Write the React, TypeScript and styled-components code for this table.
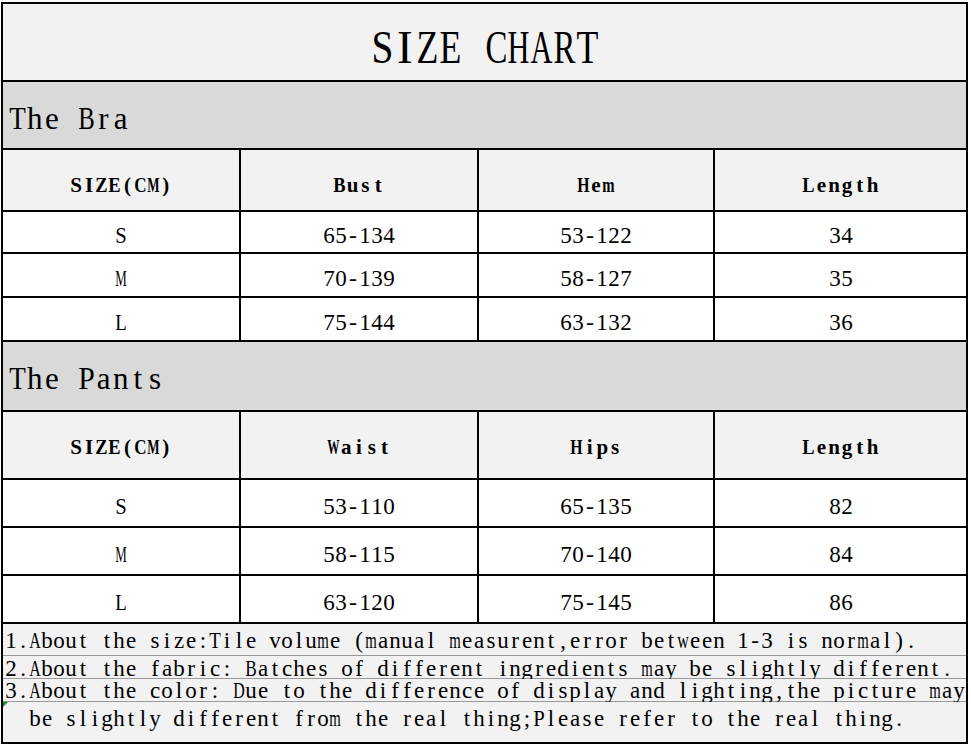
import React from "react";
import styled, { createGlobalStyle } from "styled-components";

const GlobalStyle = createGlobalStyle`
  html, body {
    margin: 0;
    padding: 0;
    background: #ffffff;
  }
`;

// SimSun-like look: serif glyphs squeezed into fixed half-width cells
const serif = `"Liberation Serif", "Noto Sans CJK SC", serif`;

// advance widths (1/1000 em) of the serif face, regular and bold
const regularW: Record<string, number> = {
  A: 722, B: 667, C: 667, D: 722, E: 611, F: 556, G: 722, H: 722, I: 333, J: 389, K: 722, L: 611, M: 889,
  N: 722, O: 722, P: 556, Q: 722, R: 667, S: 556, T: 611, U: 722, V: 722, W: 944, X: 722, Y: 722, Z: 611,
  a: 444, b: 500, c: 444, d: 500, e: 444, f: 333, g: 500, h: 500, i: 278, j: 278, k: 500, l: 278, m: 778,
  n: 500, o: 500, p: 500, q: 500, r: 333, s: 389, t: 278, u: 500, v: 500, w: 722, x: 500, y: 500, z: 444,
  "(": 333, ")": 333, "-": 333, ".": 250, ",": 250, ":": 278, ";": 278, " ": 250,
};
const boldW: Record<string, number> = {
  A: 722, B: 667, C: 722, D: 722, E: 667, H: 778, I: 389, L: 667, M: 944, P: 611, S: 556, W: 1000, Z: 667,
  a: 500, e: 444, g: 500, h: 556, i: 278, m: 833, n: 556, p: 556, s: 389, t: 333, u: 556,
  "(": 333, ")": 333,
};

type Section = {
  title: string;
  bandHeight: number;
  bandPad: number;
  headHeight: number;
  headPad: number;
  rowPad: number;
  columns: string[];
  rows: { h: number; cells: string[] }[];
};

const sections: Section[] = [
  {
    title: "The Bra",
    bandHeight: 68,
    bandPad: 6,
    headHeight: 62,
    headPad: 11,
    rowPad: 6,
    columns: ["SIZE(CM)", "Bust", "Hem", "Length"],
    rows: [
      { h: 42, cells: ["S", "65-134", "53-122", "34"] },
      { h: 44, cells: ["M", "70-139", "58-127", "35"] },
      { h: 44, cells: ["L", "75-144", "63-132", "36"] },
    ],
  },
  {
    title: "The Pants",
    bandHeight: 70,
    bandPad: 4,
    headHeight: 68,
    headPad: 4,
    rowPad: 5,
    columns: ["SIZE(CM)", "Waist", "Hips", "Length"],
    rows: [
      { h: 48, cells: ["S", "53-110", "65-135", "82"] },
      { h: 48, cells: ["M", "58-115", "70-140", "84"] },
      { h: 48, cells: ["L", "63-120", "75-145", "86"] },
    ],
  },
];

const notes: { h: number; pad: number; text: string; mark?: boolean }[] = [
  { h: 32, pad: 2, text: "1.About the size:Tile volume (manual measurent,error between 1-3 is normal)." },
  { h: 23, pad: 3, text: "2.About the fabric: Batches of different ingredients may be slightly different." },
  { h: 23, pad: 2, text: "3.About the color: Due to the difference of display and lighting,the picture may" },
  { h: 40, pad: -6, text: "  be slightly different from the real thing;Please refer to the real thing.", mark: true },
];

const Chart = styled.div`
  box-sizing: border-box;
  width: 967px;
  margin: 2px 0 0 1px;
  border: 2px solid #000;
  color: #000;
`;

const MonoLine = styled.span<{ $size: number; $lh: number; $bold?: boolean }>`
  display: inline-flex;
  font-family: ${serif};
  font-size: ${(p) => p.$size}px;
  font-weight: ${(p) => (p.$bold ? 700 : 400)};
  line-height: ${(p) => p.$lh}px;
  white-space: pre;
`;

const Glyph = styled.span<{ $w: number; $sx: number }>`
  display: inline-flex;
  justify-content: center;
  width: ${(p) => p.$w}px;
  transform: scaleX(${(p) => p.$sx});
`;

function Mono(props: { text: string; size: number; cell: number; lh?: number; bold?: boolean }) {
  const { text, size, cell, lh, bold } = props;
  const table = bold ? boldW : regularW;
  return (
    <MonoLine $size={size} $lh={lh ?? size} $bold={bold}>
      {Array.from(text).map((ch, i) => {
        const adv = ((table[ch] ?? regularW[ch] ?? 500) / 1000) * size;
        const sx = Math.min(1, (cell * 0.96) / adv);
        return (
          <Glyph key={i} $w={cell} $sx={Number(sx.toFixed(3))}>
            {ch === " " ? "\u00a0" : ch}
          </Glyph>
        );
      })}
    </MonoLine>
  );
}

const TitleRow = styled.div`
  box-sizing: border-box;
  height: 78px;
  padding-top: 10px;
  background: #f2f2f2;
  border-bottom: 2px solid #000;
  display: flex;
  align-items: center;
  justify-content: center;
`;

const Band = styled.div<{ $h: number; $pad: number }>`
  box-sizing: border-box;
  height: ${(p) => p.$h}px;
  padding: ${(p) => p.$pad}px 0 0 6px;
  background: #d9d9d9;
  border-bottom: 2px solid #000;
  display: flex;
  align-items: center;
`;

const Grid = styled.div`
  display: grid;
  grid-template-columns: 238px 238px 236px 1fr;
`;

const Cell = styled.div<{ $h: number; $pad: number; $head?: boolean }>`
  box-sizing: border-box;
  height: ${(p) => p.$h}px;
  padding-top: ${(p) => p.$pad}px;
  background: ${(p) => (p.$head ? "#f2f2f2" : "#ffffff")};
  border-right: 2px solid #000;
  border-bottom: 2px solid #000;
  display: flex;
  align-items: center;
  justify-content: center;

  &:nth-child(4n) {
    border-right: none;
  }
`;

const NoteLine = styled.div<{ $h: number; $pad: number; $mark?: boolean }>`
  position: relative;
  box-sizing: border-box;
  height: ${(p) => p.$h}px;
  padding-left: 2px;
  padding-top: ${(p) => Math.max(p.$pad, 0)}px;
  padding-bottom: ${(p) => Math.max(-p.$pad, 0)}px;
  background: #f2f2f2;
  border-bottom: 1px solid #9a9a9a;
  display: flex;
  align-items: center;

  &:last-child {
    border-bottom: none;
  }

  ${(p) =>
    p.$mark &&
    `
    &::before {
      content: "";
      position: absolute;
      left: 0;
      top: 0;
      border-top: 5px solid #1a8a1a;
      border-right: 5px solid transparent;
    }
  `}
`;

export default function App() {
  return (
    <>
      <GlobalStyle />
      <Chart>
        <TitleRow>
          <Mono text="SIZE CHART" size={47} cell={22.8} />
        </TitleRow>
        {sections.map((s) => (
          <React.Fragment key={s.title}>
            <Band $h={s.bandHeight} $pad={s.bandPad}>
              <Mono text={s.title} size={31} cell={17.2} />
            </Band>
            <Grid>
              {s.columns.map((c, i) => (
                <Cell key={"h" + i} $h={s.headHeight} $pad={s.headPad} $head>
                  <Mono text={c} size={21} cell={12.8} bold />
                </Cell>
              ))}
              {s.rows.map((r, ri) =>
                r.cells.map((v, ci) => (
                  <Cell key={ri + "-" + ci} $h={r.h} $pad={s.rowPad}>
                    <Mono text={v} size={24} cell={12} />
                  </Cell>
                ))
              )}
            </Grid>
          </React.Fragment>
        ))}
        {notes.map((n, i) => (
          <NoteLine key={i} $h={n.h} $pad={n.pad} $mark={n.mark}>
            <Mono text={n.text} size={23} cell={12} lh={18} />
          </NoteLine>
        ))}
      </Chart>
    </>
  );
}
